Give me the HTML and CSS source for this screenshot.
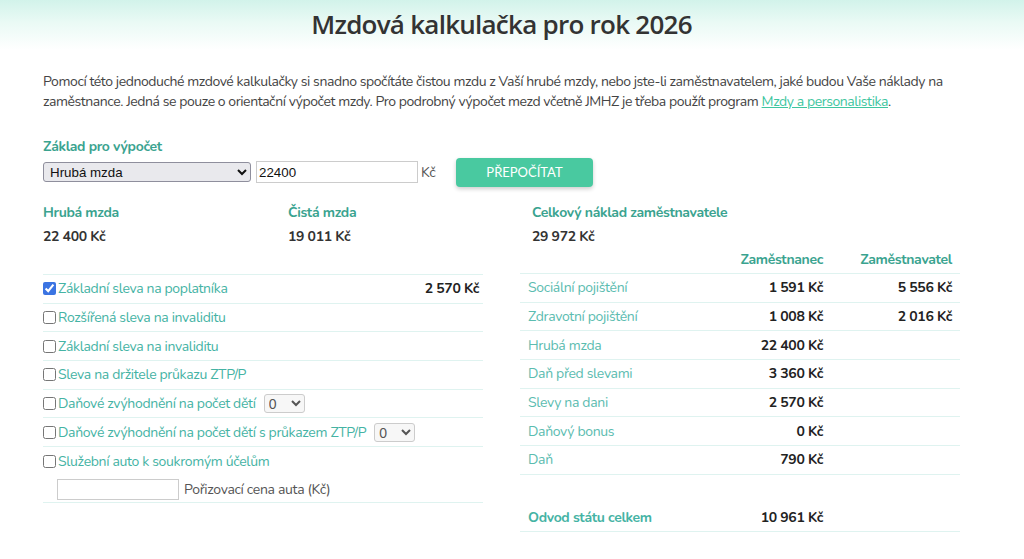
FILE: index.html
```html
<!DOCTYPE html>
<html lang="cs">
<head>
<meta charset="utf-8">
<title>Mzdová kalkulačka pro rok 2026</title>
<link rel="stylesheet" href="styles.css">
</head>
<body>
<header class="hero">
  <h1 class="title">Mzdová kalkulačka pro rok 2026</h1>
</header>
<main class="wrap">
  <p class="intro">Pomocí této jednoduché mzdové kalkulačky si snadno spočítáte čistou mzdu z Vaší hrubé mzdy, nebo jste-li zaměstnavatelem, jaké budou Vaše náklady na zaměstnance. Jedná se pouze o orientační výpočet mzdy. Pro podrobný výpočet mezd včetně JMHZ je třeba použít program <a href="#" class="link">Mzdy a personalistika</a>.</p>

  <div class="basis-label">Základ pro výpočet</div>
  <div class="controls">
    <select class="basis-select"><option>Hrubá mzda</option></select>
    <input class="amount" type="text" value="22400">
    <span class="currency">Kč</span>
    <button class="recalc" type="button">PŘEPOČÍTAT</button>
  </div>

  <div class="summary">
    <div class="sum-item"><div class="sum-label">Hrubá mzda</div><div class="sum-value">22 400 Kč</div></div>
    <div class="sum-item"><div class="sum-label">Čistá mzda</div><div class="sum-value">19 011 Kč</div></div>
    <div class="sum-item"><div class="sum-label">Celkový náklad zaměstnavatele</div><div class="sum-value">29 972 Kč</div></div>
  </div>

  <div class="tables">
    <div class="left-col">
      <div class="row"><label class="check"><input type="checkbox" checked><span>Základní sleva na poplatníka</span></label><span class="amt">2 570 Kč</span></div>
      <div class="row"><label class="check"><input type="checkbox"><span>Rozšířená sleva na invaliditu</span></label></div>
      <div class="row"><label class="check"><input type="checkbox"><span>Základní sleva na invaliditu</span></label></div>
      <div class="row"><label class="check"><input type="checkbox"><span>Sleva na držitele průkazu ZTP/P</span></label></div>
      <div class="row"><label class="check"><input type="checkbox"><span>Daňové zvýhodnění na počet dětí</span></label><select class="kids"><option>0</option></select></div>
      <div class="row"><label class="check"><input type="checkbox"><span>Daňové zvýhodnění na počet dětí s průkazem ZTP/P</span></label><select class="kids"><option>0</option></select></div>
      <div class="row row-car">
        <label class="check"><input type="checkbox"><span>Služební auto k soukromým účelům</span></label>
        <div class="car-price"><input class="car-input" type="text"><span>Pořizovací cena auta (Kč)</span></div>
      </div>
    </div>

    <div class="right-col">
      <div class="trow thead"><span></span><span class="num">Zaměstnanec</span><span class="num">Zaměstnavatel</span></div>
      <div class="trow"><span class="tl">Sociální pojištění</span><span class="num v">1 591 Kč</span><span class="num v">5 556 Kč</span></div>
      <div class="trow"><span class="tl">Zdravotní pojištění</span><span class="num v">1 008 Kč</span><span class="num v">2 016 Kč</span></div>
      <div class="trow"><span class="tl">Hrubá mzda</span><span class="num v">22 400 Kč</span><span></span></div>
      <div class="trow"><span class="tl">Daň před slevami</span><span class="num v">3 360 Kč</span><span></span></div>
      <div class="trow"><span class="tl">Slevy na dani</span><span class="num v">2 570 Kč</span><span></span></div>
      <div class="trow"><span class="tl">Daňový bonus</span><span class="num v">0 Kč</span><span></span></div>
      <div class="trow"><span class="tl">Daň</span><span class="num v">790 Kč</span><span></span></div>
      <div class="trow spacer"></div>
      <div class="trow total"><span class="tl strong">Odvod státu celkem</span><span class="num v">10 961 Kč</span><span></span></div>
    </div>
  </div>
</main>
</body>
</html>
```
FILE: styles.css
```css
* { box-sizing: border-box; }
html, body { margin: 0; padding: 0; background: #fff; }
body {
  font-family: "Nunito", Lato, "Noto Sans", sans-serif;
  font-size: 14px;
  letter-spacing: -0.33px;
  color: #444;
}
.hero {
  height: 50px;
  background: linear-gradient(to bottom, #d2f3ea 0%, #eafaf5 45%, #ffffff 100%);
  display: flex;
  justify-content: center;
  padding: 6px 64px 0 43px;
}
.title {
  margin: 0;
  font-family: "Open Sans", sans-serif;
  font-weight: 600;
  font-size: 26px;
  letter-spacing: -0.75px;
  color: #333;
  line-height: 36px;
}
.wrap {
  padding: 0 43px;
}
.intro {
  margin: 22px 0 0;
  line-height: 20px;
  color: #444;
  max-width: 938px;
  letter-spacing: -0.43px;
}
.link { color: #3ec6a0; text-decoration: underline; }
.basis-label {
  margin-top: 26px;
  color: #3aa38f;
  font-weight: 700;
  line-height: 18px;
}
.controls {
  display: flex;
  align-items: center;
  margin-top: 1px;
  height: 30px;
}
.basis-select {
  width: 208px;
  height: 20px;
  font-family: Arial, "Liberation Sans", sans-serif;
  font-size: 13.33px;
  letter-spacing: 0;
  color: #111;
  background: #e9e9ed;
  border: 1px solid #8f8f9d;
  border-radius: 3px;
  padding: 0 2px;
}
.amount {
  margin-left: 5px;
  width: 162px;
  height: 22px;
  border: 1px solid #ccc;
  font-family: Arial, "Liberation Sans", sans-serif;
  font-size: 13.33px;
  letter-spacing: 0;
  padding: 1px 2px;
  color: #111;
}
.currency { margin-left: 3px; color: #555; width: 35px; }
.recalc {
  width: 137px;
  height: 29px;
  background: #49c9a0;
  color: #fff;
  border: none;
  border-radius: 4px;
  font-family: Lato, sans-serif;
  font-weight: 400;
  font-size: 13px;
  letter-spacing: 0;
  box-shadow: 0 2px 4px rgba(0,0,0,0.2);
}
.summary {
  display: grid;
  grid-template-columns: 245px 244px 1fr;
  margin-top: 17px;
}
.sum-label { color: #3aa38f; font-weight: 700; line-height: 18px; }
.sum-value { color: #333; font-weight: 700; margin-top: 6px; line-height: 18px; }
.tables {
  display: grid;
  grid-template-columns: 440px 440px;
  column-gap: 37px;
  margin-top: 0;
}
.left-col { padding-top: 28px; }
.row {
  display: flex;
  align-items: center;
  min-height: 28.7px;
  border-top: 1px solid #dff3f0;
  padding-right: 4px;
}
.row:last-child { border-bottom: 1px solid #dff3f0; }
.check { display: flex; align-items: center; color: #45b3a4; }
.check input { margin: 0 2px 0 0; width: 13px; height: 13px; accent-color: #3b74e2; }
.amt { margin-left: auto; font-weight: 700; color: #222; }
.kids {
  margin-left: 8px;
  width: 41px;
  height: 19px;
  border: 1px solid #ccc;
  border-radius: 3px;
  background: #f7f7f7;
  color: #555;
  font-size: 14px;
}
.row-car { flex-direction: column; align-items: flex-start; padding: 5px 0 2px; }
.car-price { display: flex; align-items: center; margin: 8px 0 0 14px; color: #555; }
.car-input { width: 122px; height: 21px; border: 1px solid #ccc; margin-right: 5px; }
.trow {
  display: grid;
  grid-template-columns: 1fr 140px 129px;
  align-items: center;
  height: 28.7px;
  border-bottom: 1px solid #dff3f0;
  padding: 0 8px;
}
.thead { font-weight: 700; color: #3aa38f; height: 28px; }
.tl { color: #5bbcb0; }
.strong { font-weight: 700; color: #45b3a4; }
.num { text-align: right; }
.v { font-weight: 700; color: #222; }
.spacer { border-bottom: none; height: 28.5px; }
```
